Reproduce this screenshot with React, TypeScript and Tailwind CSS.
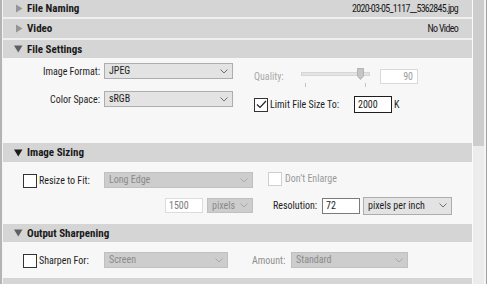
type SelProps = { text: string; w: string; disabled?: boolean; h?: string };

function Chevron({ disabled }: { disabled?: boolean }) {
  return (
    <svg width="8" height="5" viewBox="0 0 8 5" className="shrink-0">
      <path d="M0.5 0.5 L4 4 L7.5 0.5" fill="none" stroke={disabled ? "#a9a9a9" : "#6f6f6f"} strokeWidth="1" />
    </svg>
  );
}

function Select({ text, w, disabled, h }: SelProps) {
  return (
    <div
      className={`${w} ${h ?? "h-[16px]"} flex items-center justify-between pl-[4px] pr-[4px] border ${
        disabled ? "bg-[#cdcdcd] border-[#c0c0c0] text-[#8a8a8a]" : "bg-[#e3e3e3] border-[#adadad] text-[#1e1e1e]"
      }`}
    >
      <span className="leading-none">{text}</span>
      <Chevron disabled={disabled} />
    </div>
  );
}

function Checkbox({ checked, disabled }: { checked?: boolean; disabled?: boolean }) {
  return (
    <div
      className={`w-[14px] h-[14px] shrink-0 flex items-center justify-center bg-white border ${
        disabled ? "border-[#cfcfcf]" : "border-[#333333]"
      }`}
    >
      {checked && (
        <svg width="11" height="9" viewBox="0 0 11 9">
          <path d="M1 4.5 L4 7.5 L10 1" fill="none" stroke="#222" strokeWidth="1.2" />
        </svg>
      )}
    </div>
  );
}

function Header({
  title,
  open,
  right,
  h,
  dark,
}: {
  title: string;
  open?: boolean;
  right?: string;
  h: string;
  dark?: boolean;
}) {
  return (
    <div className={`${h} shrink-0 bg-[#d5d5d5] flex items-center pl-[11px] pr-[14px]`}>
      <div className="w-[9px] h-[9px] flex items-center justify-center">
        {open ? (
          <svg width="9" height="8" viewBox="0 0 9 8">
            <path d="M0 0.5 H8.5 L4.25 7.5 Z" fill={dark ? "#1c1c1c" : "#5f5f5f"} />
          </svg>
        ) : (
          <svg width="8" height="9" viewBox="0 0 8 9">
            <path d="M1 0.5 V8.5 L7.5 4.5 Z" fill="#949494" />
          </svg>
        )}
      </div>
      <span className="ml-[4px] font-bold text-[11px] text-[#1a1a1a] leading-none">{title}</span>
      <span className="flex-1" />
      {right && <span className="text-[#1a1a1a] leading-none tracking-[-0.7px]">{right}</span>}
    </div>
  );
}

export default function App() {
  return (
    <div className="w-[490px] h-[284px] flex bg-white overflow-hidden font-['Roboto_Condensed',Roboto,sans-serif] text-[10px] text-[#1e1e1e]">
      <div className="w-[2px] bg-[#b4b4b4]" />
      <div className="w-px bg-[#f4f4f4]" />
      <div className="w-[469px] flex flex-col bg-[#f7f7f7]">
        <Header title="File Naming" right="2020-03-05_1117__5362845.jpg" h="h-[17px]" />
        <div className="h-[2px] bg-[#efefef]" />
        <Header title="Video" right="No Video" h="h-[19px]" />
        <div className="h-[2px] bg-[#efefef]" />
        <Header title="File Settings" open h="h-[18px]" />
        {/* File Settings content */}
        <div className="h-[85px] flex">
          <div className="w-[251px] flex flex-col pt-[5px] gap-[12px]">
            <div className="h-[16px] flex items-center">
              <span className="w-[97px] text-right">Image Format:</span>
              <div className="w-[4px]" />
              <Select text="JPEG" w="w-[129px]" />
            </div>
            <div className="h-[16px] flex items-center">
              <span className="w-[97px] text-right">Color Space:</span>
              <div className="w-[4px]" />
              <Select text="sRGB" w="w-[129px]" />
            </div>
          </div>
          <div className="flex flex-col pt-[11px]">
            <div className="h-[15px] flex items-center">
              <span className="w-[47px] text-[#a9a9a9]">Quality:</span>
              <div className="relative w-[69px] h-[15px]">
                <div className="absolute left-0 right-0 top-[3px] h-[4px] bg-[#e4e4e4] border border-[#d6d6d6]" />
                <svg className="absolute left-[56px] top-[-1px]" width="7" height="12" viewBox="0 0 7 12">
                  <path d="M0.5 0.5 H6.5 V8 L3.5 11.5 L0.5 8 Z" fill="#c6c6c6" stroke="#b3b3b3" strokeWidth="1" />
                </svg>
                <div className="absolute left-[4px] top-[14px] w-px h-[4px] bg-[#c4c4c4]" />
                <div className="absolute left-[64px] top-[14px] w-px h-[4px] bg-[#c4c4c4]" />
              </div>
              <div className="w-[10px]" />
              <div className="w-[38px] h-[15px] bg-white border border-[#d9d9d9] flex items-center justify-end pr-[4px] text-[#9d9d9d]">
                90
              </div>
            </div>
            <div className="h-[17px] mt-[12px] flex items-center">
              <Checkbox checked />
              <span className="ml-[2px] w-[84px]">Limit File Size To:</span>
              <div className="w-[38px] h-[17px] bg-white border border-[#1e1e1e] flex items-center pl-[3px]">2000</div>
              <span className="ml-[2px]">K</span>
            </div>
          </div>
        </div>
        <Header title="Image Sizing" open dark h="h-[19px]" />
        {/* Image Sizing content */}
        <div className="h-[62px] flex flex-col pt-[10px]">
          <div className="h-[16px] flex">
            <div className="w-[101px] flex items-end pl-[20px]">
              <Checkbox />
              <span className="ml-[2px] leading-[14px]">Resize to Fit:</span>
            </div>
            <Select text="Long Edge" w="w-[149px]" disabled />
            <div className="ml-[15px] flex items-start">
              <Checkbox disabled />
              <span className="ml-[3px] text-[#9a9a9a] leading-[14px]">Don’t Enlarge</span>
            </div>
          </div>
          <div className="h-[17px] mt-[9px] flex items-center">
            <div className="w-[162px]" />
            <div className="w-[38px] h-[15px] bg-white border border-[#dcdcdc] flex items-center pl-[3px] text-[#7c7c7c]">
              1500
            </div>
            <div className="w-[4px]" />
            <Select text="pixels" w="w-[46px]" h="h-[15px]" disabled />
            <span className="ml-[20px] w-[49px]">Resolution:</span>
            <div className="w-[38px] h-[16px] bg-white border border-[#7a7a7a] flex items-center pl-[3px]">72</div>
            <div className="w-[3px]" />
            <Select text="pixels per inch" w="w-[89px]" h="h-[18px]" />
          </div>
        </div>
        <Header title="Output Sharpening" open h="h-[18px]" />
        {/* Output Sharpening content */}
        <div className="h-[36px] flex flex-col pt-[10px]">
          <div className="h-[16px] flex">
            <div className="w-[101px] flex items-end pl-[20px]">
              <Checkbox />
              <span className="ml-[2px] leading-[14px]">Sharpen For:</span>
            </div>
            <Select text="Screen" w="w-[124px]" disabled />
            <span className="ml-[24px] w-[39px] self-center text-[#8e8e8e]">Amount:</span>
            <Select text="Standard" w="w-[117px]" disabled />
          </div>
        </div>
        <div className="flex-1 bg-[#d5d5d5]" />
      </div>
      <div className="w-px bg-[#fbfbfb]" />
      <div className="w-[11px] bg-[#ececec] flex flex-col">
        <div className="h-[146px] bg-[#cdcdcd]" />
      </div>
      <div className="w-[2px] bg-[#f4f4f4]" />
      <div className="w-px bg-[#a3a3a3]" />
      <div className="flex-1 bg-white" />
    </div>
  );
}
